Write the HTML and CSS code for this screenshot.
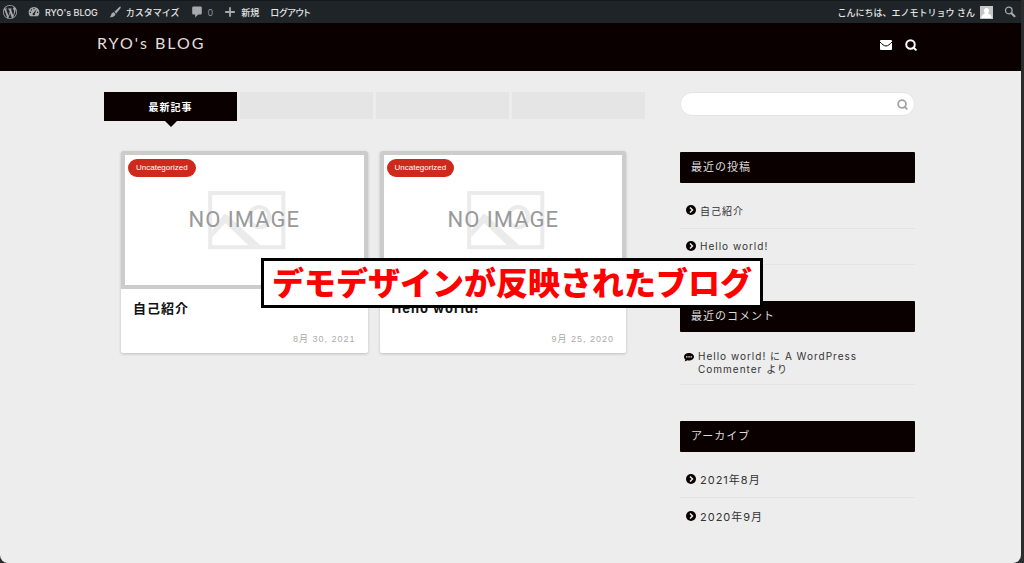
FILE: index.html
```html
<!DOCTYPE html>
<html lang="ja">
<head>
<meta charset="utf-8">
<meta name="viewport" content="width=device-width, initial-scale=1">
<title>RYO's BLOG</title>
<link rel="stylesheet" href="styles.css">
</head>
<body>
<div class="window">
  <nav class="adminbar" aria-label="管理バー">
    <a class="adminbar-link" href="#" aria-label="WordPress">
      <svg class="icon-wp" viewBox="0 0 20 20"><path d="M20 10c0-5.51-4.49-10-10-10C4.48 0 0 4.49 0 10c0 5.52 4.48 10 10 10 5.51 0 10-4.48 10-10zM7.78 15.37L4.37 6.22c.55-.02 1.17-.08 1.17-.08.5-.06.44-1.13-.06-1.11 0 0-1.45.11-2.37.11-.18 0-.37 0-.58-.01C4.12 2.69 6.87 1.11 10 1.11c2.33 0 4.45.87 6.05 2.34-.68-.11-1.65.39-1.65 1.58 0 .74.45 1.36.9 2.1.35.61.55 1.36.55 2.46 0 1.49-1.4 5-1.4 5l-3.03-8.37c.54-.02.82-.17.82-.17.5-.05.44-1.25-.06-1.22 0 0-1.44.12-2.38.12-.87 0-2.33-.12-2.33-.12-.5-.03-.56 1.2-.06 1.22l.92.08 1.26 3.41zM17.41 10c.24-.64.74-1.87.43-4.25.7 1.29 1.05 2.71 1.05 4.25 0 3.29-1.73 6.24-4.4 7.78.97-2.59 1.94-5.2 2.92-7.78zM6.1 18.09C3.12 16.65 1.11 13.53 1.11 10c0-1.3.23-2.48.72-3.59C3.25 10.3 4.67 14.2 6.1 18.09zm4.03-6.63l2.58 6.98c-.86.29-1.76.45-2.71.45-.79 0-1.57-.11-2.29-.33.81-2.38 1.62-4.74 2.42-7.1z"/></svg>
    </a>
    <a class="adminbar-link" href="#">
      <svg viewBox="0 0 20 20"><path fill-rule="evenodd" d="M3.800 17A9 9 0 1 1 16.200 17zM9 3.500h2v2H9zM4.800 5.500h2v2h-2zM3 9.500h2v2H3zM15 9.500h2v2h-2zM14.500 5.200L9 11.500a2 2 0 1 0 2.500 1.500z"/></svg>
      <span>RYO's BLOG</span>
    </a>
    <a class="adminbar-link" href="#">
      <svg viewBox="0 0 20 20"><path d="M19 1c1 1 .6 2-.2 3.200L12 12.500 9 9.700l7.800-7.500C17.600 1.300 18.400.6 19 1zM8 10.500l3 3c-.6 3.500-4 5.700-10 5.200 2.300-1.400 2-3 3-5.200.8-1.900 2.500-2.800 4-3z"/></svg>
      <span>カスタマイズ</span>
    </a>
    <a class="adminbar-link" href="#" aria-label="コメント 0件">
      <svg viewBox="0 0 20 20"><path d="M4 1h12a2 2 0 0 1 2 2v9a2 2 0 0 1-2 2h-4l-5 5v-5H4a2 2 0 0 1-2-2V3a2 2 0 0 1 2-2z"/></svg>
      <span class="muted">0</span>
    </a>
    <a class="adminbar-link" href="#">
      <svg viewBox="0 0 20 20"><path d="M8.500 2h3v6.500H18v3h-6.500V18h-3v-6.500H2v-3h6.500z"/></svg>
      <span>新規</span>
    </a>
    <a class="adminbar-link adminbar-logout" href="#">ログアウト</a>
    <a class="adminbar-link adminbar-user" href="#">
      <span>こんにちは、エノモトリョウ さん</span>
      <svg class="avatar" viewBox="0 0 13 13"><path fill="#c5c5c5" d="M0 0h13v13H0z"/><path fill="#fff" d="M6.500 2a2.600 2.600 0 0 1 1.600 4.700c.2 1.300 2.900 1.400 3.400 4.300v1h-10v-1c.5-2.900 3.200-3 3.400-4.300A2.600 2.600 0 0 1 6.500 2z"/></svg>
    </a>
    <a class="adminbar-link" href="#" aria-label="検索">
      <svg viewBox="0 0 20 20"><g fill="none" stroke="#a7aaad"><circle cx="8" cy="7.500" r="5.500" stroke-width="2.200"/><path stroke-width="3.500" stroke-linecap="round" d="M12.500 12l5 5"/></g></svg>
    </a>
  </nav>

  <header class="site-header">
    <div class="wrap header-inner">
      <a class="site-title" href="#">RYO's BLOG</a>
      <a class="header-icon" href="#" aria-label="お問い合わせ"><svg viewBox="0 0 24 20"><path fill="#fff" d="M2 0h20a2 2 0 0 1 2 2v16a2 2 0 0 1-2 2H2a2 2 0 0 1-2-2V2a2 2 0 0 1 2-2z"/><path fill="none" stroke="#0b0000" stroke-width="2" d="M0 4c4 4 8 8 12 8s8-4 12-8"/></svg></a>
      <button class="header-icon" type="button" aria-label="検索"><svg viewBox="0 0 24 24"><g fill="none" stroke="#fff" stroke-width="4"><circle cx="11" cy="11" r="8.500"/><path stroke-linecap="round" d="M17 17l4.500 4.500"/></g></svg></button>
    </div>
  </header>

  <div class="wrap content">
    <main class="main">
      <div class="tabs" role="tablist">
        <button class="tab tab-active" type="button" role="tab" aria-selected="true">最新記事</button>
        <button class="tab" type="button" role="tab" aria-label="タブ2"></button>
        <button class="tab" type="button" role="tab" aria-label="タブ3"></button>
        <button class="tab" type="button" role="tab" aria-label="タブ4"></button>
      </div>
      <div class="cards">
        <article class="card">
          <div class="thumb">
            <svg viewBox="0 0 238 130"><g fill="none" stroke="#ebebeb" stroke-width="4"><rect x="85" y="38" width="73" height="54"/><circle cx="134" cy="62" r="10"/></g><path fill="#ebebeb" d="M87 75l11-15q2-2 4 0l33 30H123L100 68 87 82z"/><text x="119" y="72" text-anchor="middle">NO IMAGE</text></svg>
            <a class="badge" href="#">Uncategorized</a>
          </div>
          <div class="card-body">
            <h2 class="card-title">自己紹介</h2>
            <time class="card-date" datetime="2021-08-30">8月 30, 2021</time>
          </div>
        </article>
        <article class="card">
          <div class="thumb">
            <svg viewBox="0 0 238 130"><g fill="none" stroke="#ebebeb" stroke-width="4"><rect x="85" y="38" width="73" height="54"/><circle cx="134" cy="62" r="10"/></g><path fill="#ebebeb" d="M87 75l11-15q2-2 4 0l33 30H123L100 68 87 82z"/><text x="119" y="72" text-anchor="middle">NO IMAGE</text></svg>
            <a class="badge" href="#">Uncategorized</a>
          </div>
          <div class="card-body">
            <h2 class="card-title">Hello world!</h2>
            <time class="card-date" datetime="2020-09-25">9月 25, 2020</time>
          </div>
        </article>
      </div>
    </main>

    <aside class="sidebar">
      <form class="search">
        <input class="search-input" type="search" aria-label="サイト内検索">
        <button class="search-button" type="button" aria-label="検索"><svg viewBox="0 0 24 24"><g fill="none" stroke="#a3a3a3" stroke-width="4"><circle cx="11" cy="11" r="8.500"/><path stroke-linecap="round" d="M17 17l4.500 4.500"/></g></svg></button>
      </form>
      <section class="widget">
        <h2 class="widget-title">最近の投稿</h2>
        <ul class="list">
          <li><svg viewBox="0 0 20 20"><circle cx="10" cy="10" r="10"/><path fill="none" stroke="#eee" stroke-width="3" d="M8 5l5 5-5 5"/></svg><a href="#">自己紹介</a></li>
          <li><svg viewBox="0 0 20 20"><circle cx="10" cy="10" r="10"/><path fill="none" stroke="#eee" stroke-width="3" d="M8 5l5 5-5 5"/></svg><a href="#">Hello world!</a></li>
        </ul>
      </section>
      <section class="widget">
        <h2 class="widget-title">最近のコメント</h2>
        <ul class="list list-comments">
          <li><svg viewBox="0 0 20 18"><path d="M10 1c5.500 0 10 3.300 10 7.500S15.500 16 10 16c-1.200 0-2.400-.1-3.400-.4C5 17 3 17.600 1 17.500c1-.9 1.700-2 1.800-3.200C1 12.800 0 10.700 0 8.500 0 4.300 4.500 1 10 1z"/><path fill="#eee" d="M4 7.500h3v2.500H4zM8.500 7.500h3v2.500h-3zM13 7.500h3v2.500h-3z"/></svg><span><a href="#">Hello world!</a> に <a href="#">A WordPress Commenter</a> より</span></li>
        </ul>
      </section>
      <section class="widget">
        <h2 class="widget-title">アーカイブ</h2>
        <ul class="list list-archive">
          <li><svg viewBox="0 0 20 20"><circle cx="10" cy="10" r="10"/><path fill="none" stroke="#eee" stroke-width="3" d="M8 5l5 5-5 5"/></svg><a href="#">2021年8月</a></li>
          <li><svg viewBox="0 0 20 20"><circle cx="10" cy="10" r="10"/><path fill="none" stroke="#eee" stroke-width="3" d="M8 5l5 5-5 5"/></svg><a href="#">2020年9月</a></li>
        </ul>
      </section>
    </aside>
  </div>
</div>
<p class="caption">デモデザインが反映されたブログ</p>
</body>
</html>
```

FILE: styles.css
```css
* { box-sizing: border-box; }

body {
  margin: 0;
  position: relative;
  background: #2b2c2e;
  color: #333;
  font-family: Inter, "Noto Sans CJK JP", sans-serif;
  font-size: 11px;
  letter-spacing: 1px;
}

a { color: inherit; text-decoration: none; }
button { padding: 0; border: 0; background: none; font: inherit; letter-spacing: inherit; }
svg { display: block; flex: none; }
h2, p, ul { margin: 0; padding: 0; }

.window {
  min-height: 100vh;
  margin-right: 3px;
  overflow: hidden;
  border-radius: 0 0 8px 8px;
  background: #ededed;
}

.adminbar {
  display: flex;
  align-items: center;
  gap: 11px;
  height: 23px;
  padding: 0 5px 0 3px;
  border-top: 1px solid #14181b;
  background: #1f2428;
  color: #e4e4e4;
  font-size: 9px;
  font-weight: 500;
  letter-spacing: 0;
}
.adminbar-link { display: flex; align-items: center; gap: 5px; }
.adminbar-link svg { width: 12px; height: 12px; fill: #a7aaad; }
.adminbar-link .icon-wp { width: 14px; height: 14px; }
.adminbar-link .avatar { width: 13px; height: 13px; }
.adminbar-logout { font-feature-settings: "palt"; }
.adminbar-user { margin-left: auto; }
.muted { color: #8d9195; font-weight: 400; }

.wrap { width: 100%; max-width: 827px; margin: 0 auto; }

.site-header { background: #0b0000; }
.header-inner {
  display: flex;
  align-items: center;
  gap: 13px;
  height: 48px;
  padding: 0 7px 4px 0;
}
.site-title {
  margin-right: auto;
  padding-bottom: 4px;
  color: #e2dede;
  font-family: Lato, sans-serif;
  font-size: 16px;
  line-height: 20px;
  letter-spacing: 2px;
}
.header-icon svg { width: 12px; height: 12px; }

.content {
  display: flex;
  gap: 35px;
  padding: 21px 9px 28px 7px;
}
.main { flex: 1; min-width: 0; }

.tabs { display: grid; grid-template-columns: repeat(4, 1fr); align-items: start; gap: 3px; }
.tab { height: 27px; background: #e5e5e5; }
.tab-active {
  position: relative;
  height: 29px;
  background: #0b0000;
  color: #fff;
  font-size: 10px;
  font-weight: 700;
}
.tab-active::after {
  content: "";
  position: absolute;
  top: 100%;
  left: 50%;
  margin-left: -6px;
  border: 6px solid transparent;
  border-top-color: #0b0000;
  border-bottom: 0;
}

.cards {
  display: grid;
  grid-template-columns: 1fr 1fr;
  gap: 12px;
  padding: 30px 19px 0 17px;
}
.card {
  overflow: hidden;
  border-radius: 2px;
  background: #fff;
  box-shadow: 0 1px 3px rgba(0, 0, 0, 0.2);
}
.thumb { position: relative; border: 4px solid #ccc; }
.thumb svg { width: 100%; height: auto; }
.thumb text { fill: #999; font-family: Roboto, sans-serif; font-size: 22px; letter-spacing: 1px; }
.badge {
  position: absolute;
  top: 4px;
  left: 3px;
  padding: 0 8px;
  border-radius: 9px;
  background: #cd2a1d;
  color: #fff;
  font-family: "Liberation Sans", sans-serif;
  font-size: 8px;
  line-height: 18px;
  letter-spacing: 0;
}
.card-body { display: flex; flex-direction: column; padding: 9px 12px 7px; }
.card-title { color: #111; font-size: 13px; font-weight: 700; line-height: 20px; }
.card-date {
  margin-top: 14px;
  align-self: flex-end;
  color: #aaa;
  font-family: "Liberation Sans", "Noto Sans CJK JP", sans-serif;
  font-size: 9px;
  line-height: 14px;
}

.sidebar { width: 235px; }
.search {
  display: flex;
  align-items: center;
  height: 24px;
  margin-bottom: 36px;
  padding: 0 6px 0 12px;
  border: 1px solid #e4e4e4;
  border-radius: 12px;
  background: #fff;
}
.search-input { flex: 1; min-width: 0; border: 0; outline: 0; background: none; font: inherit; }
.search-button svg { width: 11px; height: 11px; }

.widget { margin-bottom: 36px; }
.widget:last-child { margin-bottom: 0; }
.widget-title {
  padding: 0 11px;
  border-radius: 1px;
  background: #0b0000;
  color: #ddd;
  font-size: 11px;
  font-weight: 400;
  line-height: 31px;
}
.list { padding-top: 10px; list-style: none; }
.list li {
  display: flex;
  align-items: center;
  gap: 4px;
  min-height: 36px;
  padding: 0 0 1px 6px;
  border-bottom: 1px solid #e4e4e4;
  font-size: 10px;
}
.list svg { width: 10px; height: 10px; fill: #0b0000; }
.list-archive li { font-size: 11px; }
.list-archive li:last-child { border-bottom: 0; }
.list-comments li {
  align-items: flex-start;
  padding: 8px 30px 8px 4px;
  line-height: 13px;
}
.list-comments svg { margin-top: 2px; }

.caption {
  position: absolute;
  top: 258px;
  left: 50%;
  transform: translateX(-50%);
  padding: 0 8px 4px;
  border: 3px solid #000;
  background: #fff;
  color: #f00;
  font-family: "Noto Sans CJK JP", sans-serif;
  font-size: 32px;
  font-weight: 900;
  line-height: 40px;
  letter-spacing: 0;
  white-space: nowrap;
}
```
